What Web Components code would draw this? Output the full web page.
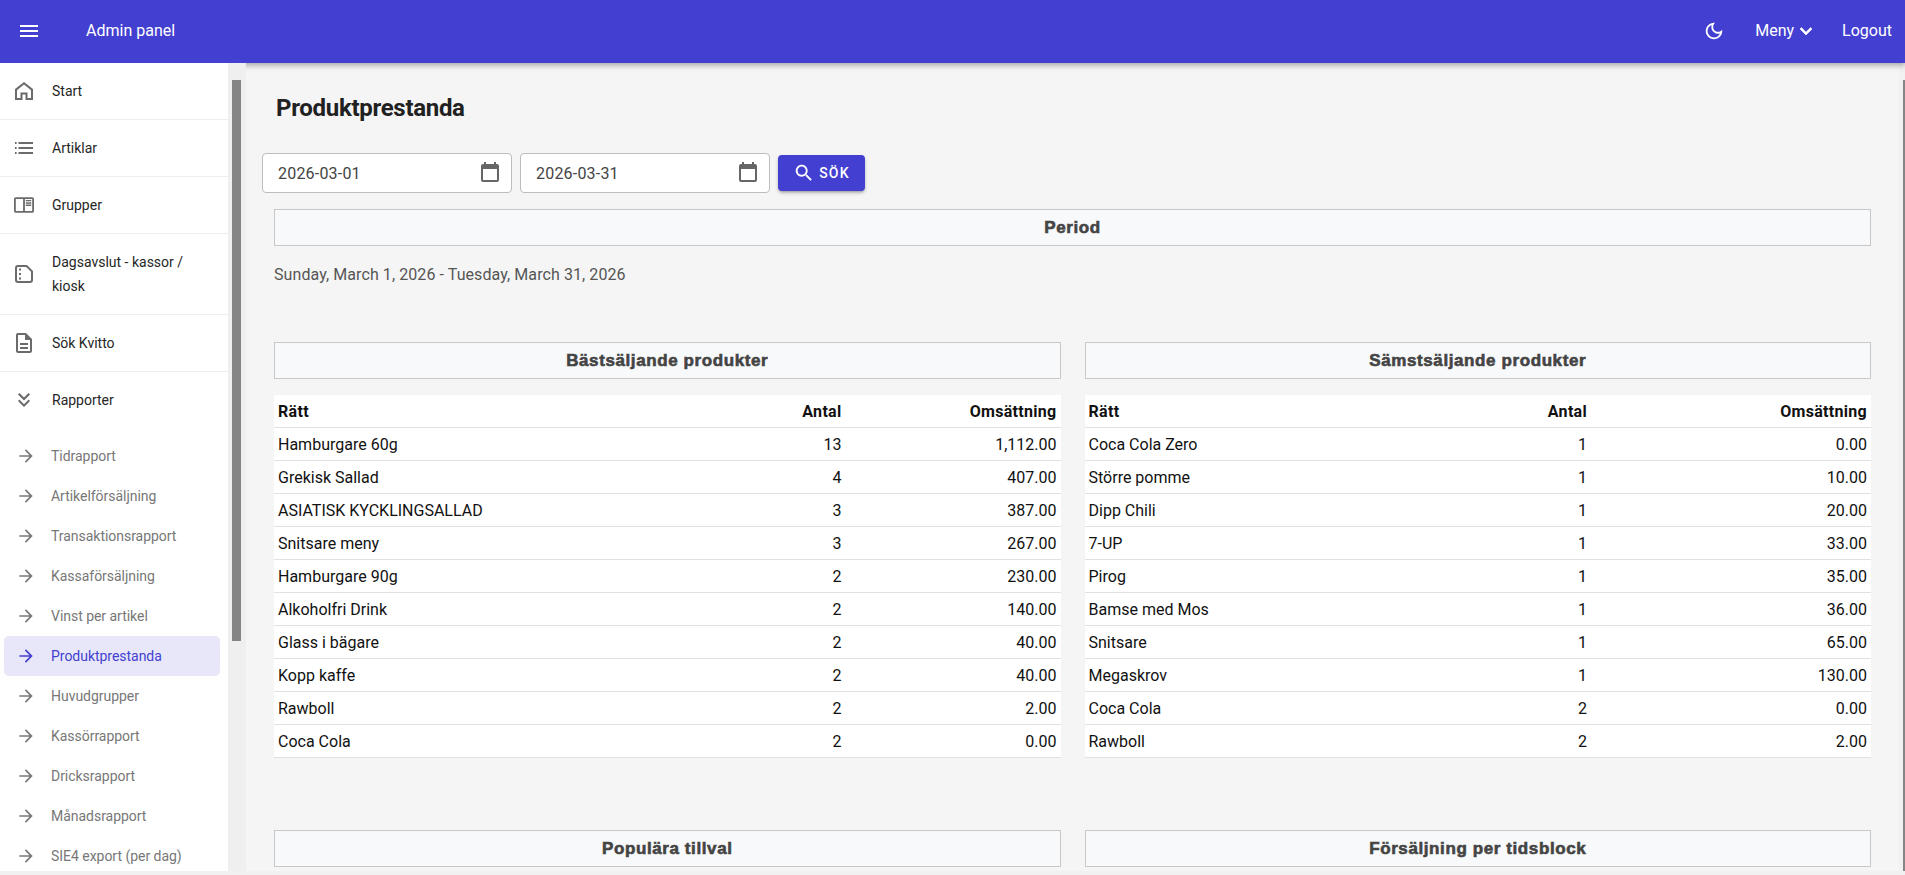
<!DOCTYPE html>
<html lang="sv">
<head>
<meta charset="utf-8">
<title>Produktprestanda</title>
<style>
  html, body { margin: 0; height: 100%; overflow: hidden; background: #f1f1f1; }
  body { font-family: Roboto, "Liberation Sans", sans-serif; }
</style>
</head>
<body>
<admin-shell>
  <app-bar slot="bar"></app-bar>
  <side-nav slot="nav">
    <nav-row icon="home">Start</nav-row>
    <nav-row icon="list">Artiklar</nav-row>
    <nav-row icon="reader">Grupper</nav-row>
    <nav-row icon="sdcard">Dagsavslut - kassor / kiosk</nav-row>
    <nav-row icon="doc">Sök Kvitto</nav-row>
    <nav-row icon="double" last>Rapporter</nav-row>
    <nav-sub>Tidrapport</nav-sub>
    <nav-sub>Artikelförsäljning</nav-sub>
    <nav-sub>Transaktionsrapport</nav-sub>
    <nav-sub>Kassaförsäljning</nav-sub>
    <nav-sub>Vinst per artikel</nav-sub>
    <nav-sub active>Produktprestanda</nav-sub>
    <nav-sub>Huvudgrupper</nav-sub>
    <nav-sub>Kassörrapport</nav-sub>
    <nav-sub>Dricksrapport</nav-sub>
    <nav-sub>Månadsrapport</nav-sub>
    <nav-sub>SIE4 export (per dag)</nav-sub>
  </side-nav>
  <report-page slot="main">
    <span slot="title">Produktprestanda</span>
    <date-field slot="filters" value="2026-03-01"></date-field>
    <date-field slot="filters" value="2026-03-31"></date-field>
    <search-button slot="filters">Sök</search-button>

    <section-title>Period</section-title>
    <p class="period">Sunday, March 1, 2026 - Tuesday, March 31, 2026</p>

    <two-cols gap="55">
      <div>
        <section-title>Bästsäljande produkter</section-title>
        <data-table id="best" amount-width="215"></data-table>
      </div>
      <div>
        <section-title>Sämstsäljande produkter</section-title>
        <data-table id="worst" amount-width="280"></data-table>
      </div>
    </two-cols>

    <two-cols gap="72">
      <section-title>Populära tillval</section-title>
      <section-title>Försäljning per tidsblock</section-title>
    </two-cols>
  </report-page>
</admin-shell>

<script>
const ICONS = {
  menu: '<path d="M3 18h18v-2H3v2zm0-5h18v-2H3v2zm0-7v2h18V6H3z"/>',
  moon: '<path d="M9.37 5.51C9.19 6.15 9.1 6.82 9.1 7.5c0 4.08 3.32 7.4 7.4 7.4.68 0 1.35-.09 1.99-.27C17.45 17.19 14.93 19 12 19c-3.86 0-7-3.14-7-7 0-2.93 1.81-5.45 4.37-6.49zM12 3c-4.97 0-9 4.03-9 9s4.03 9 9 9 9-4.03 9-9c0-.46-.04-.92-.1-1.36-.98 1.37-2.58 2.26-4.4 2.26-2.98 0-5.4-2.42-5.4-5.4 0-1.81.89-3.42 2.26-4.4-.44-.06-.9-.1-1.36-.1z"/>',
  chevron: '<path d="M7.41 8.59 12 13.17l4.59-4.58L18 10l-6 6-6-6z" stroke="currentColor" stroke-width=".6"/>',
  home: '<path d="M12 4.2 4 10.6V20h5.5v-5.5h5V20H20v-9.4z" fill="none" stroke="currentColor" stroke-width="2"/>',
  list: '<path d="M3 11h1.6v2H3zm0-5h1.6v2H3zm0 10h1.6v2H3zM6.5 11H21v2H6.5zm0-5H21v2H6.5zm0 10H21v2H6.5z"/>',
  reader: '<path transform="translate(12 12) scale(.91) translate(-12 -12.5)" d="M21 4H3c-1.1 0-2 .9-2 2v13c0 1.1.9 2 2 2h18c1.1 0 2-.9 2-2V6c0-1.1-.9-2-2-2zM3 19V6h8v13H3zm18 0h-8V6h8v13zm-7-9.5h6V11h-6zm0 2.5h6v1.5h-6zm0-5h6v1.5h-6z"/>',
  sdcard: '<path d="M6 4h8.6L20 9.4V18a2 2 0 0 1-2 2H6a2 2 0 0 1-2-2V6a2 2 0 0 1 2-2z" fill="none" stroke="currentColor" stroke-width="2"/><path d="M7 6.4h2v2H7zm0 4.6h2v2H7zm0 4.4h2v2H7z"/>',
  doc: '<path d="M8 16h8v2H8zm0-4h8v2H8zm6-10H6c-1.1 0-2 .9-2 2v16c0 1.1.89 2 1.99 2H18c1.1 0 2-.9 2-2V8l-6-6zm4 18H6V4h7v5h5v11z"/>',
  double: '<path d="M18 6.41 16.59 5 12 9.58 7.41 5 6 6.41l6 6z"/><path d="m18 13-1.41-1.41L12 16.17l-4.59-4.58L6 13l6 6z"/>',
  arrow: '<path d="M12 4l-1.41 1.41L16.17 11H4v2h12.17l-5.58 5.59L12 20l8-8z"/>',
  calendar: '<path d="M19 19H5V8H19M16 1V3H8V1H6V3H5C3.89 3 3 3.89 3 5V19A2 2 0 0 0 5 21H19A2 2 0 0 0 21 19V5C21 3.89 20.1 3 19 3H18V1"/>',
  search: '<path d="M15.5 14h-.79l-.28-.27C15.41 12.59 16 11.11 16 9.5 16 5.91 13.09 3 9.5 3S3 5.91 3 9.5 5.91 16 9.5 16c1.61 0 3.09-.59 4.23-1.57l.27.28v.79l5 4.99L20.49 19l-4.99-5zm-6 0C7.01 14 5 11.99 5 9.5S7.01 5 9.5 5 14 7.01 14 9.5 11.99 14 9.5 14z"/>'
};
const svg = (name, size) => `<svg width="${size}" height="${size}" viewBox="0 0 24 24" fill="currentColor" aria-hidden="true">${ICONS[name]}</svg>`;

class AdminShell extends HTMLElement {
  constructor() {
    super();
    this.attachShadow({ mode: "open" }).innerHTML = `
      <style>
        :host { display: flex; flex-direction: column; height: 875px; background: #f1f1f1; }
        .body { flex: 1; display: flex; min-height: 0; }
        .foot { height: 4px; flex: none; }
      </style>
      <slot name="bar"></slot>
      <div class="body">
        <slot name="nav"></slot>
        <slot name="main"></slot>
      </div>
      <div class="foot"></div>`;
  }
}

class AppBar extends HTMLElement {
  constructor() {
    super();
    this.attachShadow({ mode: "open" }).innerHTML = `
      <style>
        :host {
          display: flex; align-items: center; flex: none; height: 63px; box-sizing: border-box;
          padding: 0 13px 2px 17px; background: #433fd0; color: #fff; font-size: 16px;
          position: relative; z-index: 1; box-shadow: 0 2px 6px rgba(0,0,0,.35);
        }
        svg { display: block; }
        .brand { margin-left: 45px; flex: 1; }
        .moon { margin-right: 30px; }
        .meny { display: flex; align-items: center; margin-right: 24px; }
      </style>
      ${svg("menu", 24)}
      <span class="brand">Admin panel</span>
      <span class="moon">${svg("moon", 22)}</span>
      <span class="meny">Meny ${svg("chevron", 24)}</span>
      <span>Logout</span>`;
  }
}

class SideNav extends HTMLElement {
  constructor() {
    super();
    this.attachShadow({ mode: "open" }).innerHTML = `
      <style>
        :host { display: flex; flex: none; width: 246px; height: 808px; position: relative; z-index: 2; overflow: hidden; }
        .items { width: 228px; flex: none; background: #fff; }
        .track { flex: 1; background: #efefef; padding: 17px 0 0 4px; }
        .thumb { width: 9px; height: 561px; background: #858585; }
      </style>
      <div class="items"><slot></slot></div>
      <div class="track"><div class="thumb"></div></div>`;
  }
}

class NavRow extends HTMLElement {
  constructor() {
    super();
    this.attachShadow({ mode: "open" }).innerHTML = `
      <style>
        :host {
          display: flex; align-items: center; box-sizing: border-box; padding: 16px 16px 16px 12px;
          border-bottom: 1px solid #eeeeee; font-size: 14px; font-weight: 450; line-height: 24px; color: #262626;
        }
        :host([last]) { border-bottom-color: transparent; }
        .icon { flex: none; display: flex; width: 24px; height: 24px; margin-right: 16px; color: #6b6b6b; }
      </style>
      <span class="icon">${svg(this.getAttribute("icon"), 24)}</span>
      <span><slot></slot></span>`;
  }
}

class NavSub extends HTMLElement {
  constructor() {
    super();
    this.attachShadow({ mode: "open" }).innerHTML = `
      <style>
        :host {
          display: flex; align-items: center; height: 40px; margin: 0 8px 0 4px; padding-left: 12px;
          border-radius: 5px; font-size: 14px; color: #777; letter-spacing: -.03px;
        }
        :host(:first-of-type) { margin-top: 7px; }
        :host([active]) { background: #e8e7fa; color: #433fd0; font-weight: 450; }
        .icon { display: flex; margin-right: 15px; color: #777; }
        :host([active]) .icon { color: #433fd0; }
      </style>
      <span class="icon">${svg("arrow", 20)}</span>
      <span><slot></slot></span>`;
  }
}

class ReportPage extends HTMLElement {
  constructor() {
    super();
    this.attachShadow({ mode: "open" }).innerHTML = `
      <style>
        :host { display: block; flex: 1; min-width: 0; height: 808px; overflow: hidden; position: relative; background: #f5f5f5; font-size: 16px; }
        .scroll { margin-right: 6px; padding: 31px 28px 0 16px; background: #f5f5f5; height: 100%; box-sizing: border-box; }
        .bar { position: absolute; top: 0; right: 0; bottom: 0; width: 6px; background: #f1f1f1; }
        .bar i { position: absolute; top: 17px; left: 4px; right: 0; bottom: 0; background: #858585; }
        h1 { margin: 0 0 31px 14px; font-size: 24px; line-height: 28px; font-weight: 700; color: #212121; letter-spacing: -.3px; }
        .filters { display: flex; gap: 8px; align-items: center; margin-bottom: 16px; }
        .content { margin-left: 12px; }
        ::slotted(.period) { margin: 17px 0 0; line-height: 24px; color: #555; letter-spacing: .08px; }
      </style>
      <div class="scroll">
        <h1><slot name="title"></slot></h1>
        <div class="filters"><slot name="filters"></slot></div>
        <div class="content"><slot></slot></div>
      </div>
      <div class="bar"><i></i></div>`;
  }
}

class DateField extends HTMLElement {
  constructor() {
    super();
    this.attachShadow({ mode: "open" }).innerHTML = `
      <style>
        :host {
          display: flex; align-items: center; justify-content: space-between; box-sizing: border-box;
          width: 250px; height: 40px; padding: 0 9px 0 15px; background: #fff;
          border: 1px solid #bdbdbd; border-radius: 4px; font-size: 16px; color: #444; letter-spacing: .2px;
        }
        .icon { display: flex; color: #666; }
      </style>
      <span>${this.getAttribute("value")}</span>
      <span class="icon">${svg("calendar", 24)}</span>`;
  }
}

class SearchButton extends HTMLElement {
  constructor() {
    super();
    this.attachShadow({ mode: "open" }).innerHTML = `
      <style>
        :host {
          display: flex; align-items: center; justify-content: center; box-sizing: border-box;
          width: 87px; height: 36px; background: #433fd0; color: #fff; border-radius: 4px;
          font-size: 14px; font-weight: 500; letter-spacing: 1.25px; text-transform: uppercase;
          box-shadow: 0 2px 3px -1px rgba(0,0,0,.3), 0 2px 4px rgba(0,0,0,.14);
        }
        .icon { display: flex; margin-right: 4px; }
      </style>
      <span class="icon">${svg("search", 22)}</span>
      <slot></slot>`;
  }
}

class SectionTitle extends HTMLElement {
  constructor() {
    super();
    this.attachShadow({ mode: "open" }).innerHTML = `
      <style>
        :host {
          display: block; box-sizing: border-box; height: 37px; line-height: 36px; text-align: center;
          background: #f8f9fa; border: 1px solid #c8c8c8; color: #444;
          font-family: "Liberation Sans", Arial, sans-serif; font-size: 17px; font-weight: 700; letter-spacing: .6px;
          -webkit-text-stroke: .6px #444;
        }
      </style>
      <slot></slot>`;
  }
}

class TwoCols extends HTMLElement {
  constructor() {
    super();
    this.attachShadow({ mode: "open" }).innerHTML = `
      <style>
        :host { display: grid; grid-template-columns: 1fr 1fr; column-gap: 24px; margin-top: ${this.getAttribute("gap")}px; }
      </style>
      <slot></slot>`;
  }
}

class DataTable extends HTMLElement {
  constructor() {
    super();
    this.attachShadow({ mode: "open" });
  }
  set rows(list) {
    const amount = this.getAttribute("amount-width");
    const body = list.map(r => `<tr><td>${r[0]}</td><td>${r[1]}</td><td>${r[2]}</td></tr>`).join("");
    this.shadowRoot.innerHTML = `
      <style>
        :host { display: block; margin-top: 16px; background: #fff; color: #111; font-size: 16px; }
        table { width: 100%; border-collapse: collapse; table-layout: fixed; }
        th, td { height: 31px; padding: 1px 4px 0; border-bottom: 1px solid #dee2e6; text-align: right; font-weight: 400; line-height: 24px; }
        th { font-weight: 700; letter-spacing: .3px; }
        th:first-child, td:first-child { text-align: left; }
      </style>
      <table>
        <colgroup><col><col style="width:120px"><col style="width:${amount}px"></colgroup>
        <thead><tr><th>Rätt</th><th>Antal</th><th>Omsättning</th></tr></thead>
        <tbody>${body}</tbody>
      </table>`;
  }
}

customElements.define("admin-shell", AdminShell);
customElements.define("app-bar", AppBar);
customElements.define("side-nav", SideNav);
customElements.define("nav-row", NavRow);
customElements.define("nav-sub", NavSub);
customElements.define("report-page", ReportPage);
customElements.define("date-field", DateField);
customElements.define("search-button", SearchButton);
customElements.define("section-title", SectionTitle);
customElements.define("two-cols", TwoCols);
customElements.define("data-table", DataTable);

document.getElementById("best").rows = [
  ["Hamburgare 60g", 13, "1,112.00"], ["Grekisk Sallad", 4, "407.00"],
  ["ASIATISK KYCKLINGSALLAD", 3, "387.00"], ["Snitsare meny", 3, "267.00"],
  ["Hamburgare 90g", 2, "230.00"], ["Alkoholfri Drink", 2, "140.00"],
  ["Glass i bägare", 2, "40.00"], ["Kopp kaffe", 2, "40.00"],
  ["Rawboll", 2, "2.00"], ["Coca Cola", 2, "0.00"]
];
document.getElementById("worst").rows = [
  ["Coca Cola Zero", 1, "0.00"], ["Större pomme", 1, "10.00"],
  ["Dipp Chili", 1, "20.00"], ["7-UP", 1, "33.00"],
  ["Pirog", 1, "35.00"], ["Bamse med Mos", 1, "36.00"],
  ["Snitsare", 1, "65.00"], ["Megaskrov", 1, "130.00"],
  ["Coca Cola", 2, "0.00"], ["Rawboll", 2, "2.00"]
];
</script>
</body>
</html>
